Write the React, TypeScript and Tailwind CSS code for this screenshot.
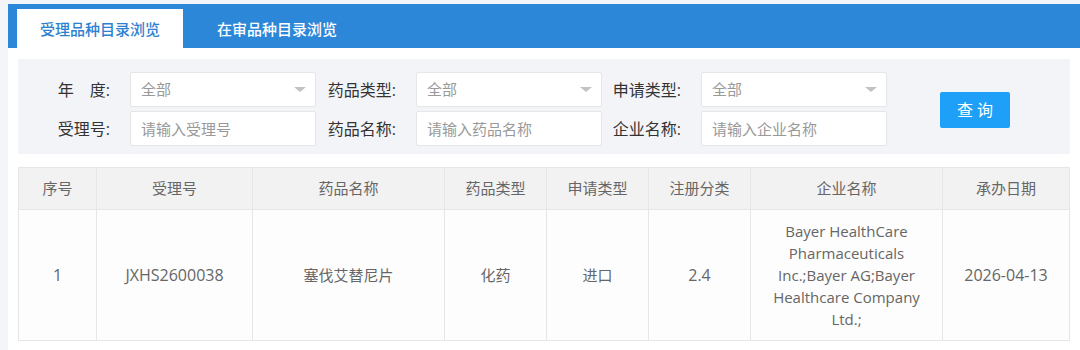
const font = { fontFamily: '"Open Sans", "Noto Sans CJK SC", sans-serif' };

interface Row {
  index: number;
  acceptNo: string;
  drugName: string;
  drugType: string;
  applyType: string;
  regClass: string;
  company: string;
  date: string;
}

const rows: Row[] = [
  {
    index: 1,
    acceptNo: 'JXHS2600038',
    drugName: '塞伐艾替尼片',
    drugType: '化药',
    applyType: '进口',
    regClass: '2.4',
    company: 'Bayer HealthCare Pharmaceuticals Inc.;Bayer AG;Bayer Healthcare Company Ltd.;',
    date: '2026-04-13',
  },
];

const columns = [
  { title: '序号', w: 'w-[78px]' },
  { title: '受理号', w: 'w-[156px]' },
  { title: '药品名称', w: 'w-[192px]' },
  { title: '药品类型', w: 'w-[102px]' },
  { title: '申请类型', w: 'w-[102px]' },
  { title: '注册分类', w: 'w-[102px]' },
  { title: '企业名称', w: 'w-[192px]' },
  { title: '承办日期', w: 'w-[127px]' },
];

const SelectBox: React.FC<{ value: string }> = ({ value }) => (
  <div className="flex h-[35px] w-[186px] items-center justify-between rounded-[2px] border border-[#e6e6e6] bg-white pl-[10px] pr-[9px] text-[15px] text-[#999]">
    <span>{value}</span>
    <span className="h-0 w-0 border-x-[6px] border-t-[5px] border-x-transparent border-t-[#c2c2c2]" />
  </div>
);

const InputBox: React.FC<{ placeholder: string }> = ({ placeholder }) => (
  <input
    placeholder={placeholder}
    className="h-[35px] w-[186px] rounded-[2px] border border-[#e6e6e6] bg-white pl-[10px] text-[15px] text-[#333] outline-none placeholder:text-[#999]"
  />
);

const Label: React.FC<{ text: string; w: string }> = ({ text, w }) => (
  <div className={`${w} pr-[20px] text-right text-[16px] text-[#333]`}>{text}</div>
);

export default function App() {
  return (
    <div className="min-h-[350px] w-[1080px] bg-[#f3f5f8] pl-[8px] pt-[4px]" style={font}>
      <div className="min-h-[346px] bg-white">
        {/* tabs */}
        <div className="flex h-[44px] items-end bg-[#2d87d8] pl-[9px]">
          <div className="flex h-[39px] w-[166px] items-center justify-center bg-white pt-[1px] text-[15px] font-medium text-[#2d7fd0]">
            受理品种目录浏览
          </div>
          <div className="flex h-[39px] w-[188px] items-center justify-center pt-[1px] text-[15px] font-medium text-white">
            在审品种目录浏览
          </div>
        </div>

        <div className="pl-[10px] pr-[2px]">
          {/* filters */}
          <div className="mt-[11px] flex h-[95px] w-[1052px] items-start bg-[#f3f4f7] pt-[13px]">
            <div className="flex flex-col gap-[4px]">
              <div className="flex items-center">
                <Label text="年　度:" w="w-[112px]" />
                <SelectBox value="全部" />
                <Label text="药品类型:" w="w-[100px]" />
                <SelectBox value="全部" />
                <Label text="申请类型:" w="w-[99px]" />
                <SelectBox value="全部" />
              </div>
              <div className="flex items-center">
                <Label text="受理号:" w="w-[112px]" />
                <InputBox placeholder="请输入受理号" />
                <Label text="药品名称:" w="w-[100px]" />
                <InputBox placeholder="请输入药品名称" />
                <Label text="企业名称:" w="w-[99px]" />
                <InputBox placeholder="请输入企业名称" />
              </div>
            </div>
            <button className="ml-[53px] mt-[20px] h-[36px] w-[70px] rounded-[2px] bg-[#1e9ff8] pl-[4px] text-[16px] tracking-[4px] text-white">
              查询
            </button>
          </div>

          {/* table */}
          <table className="mt-[13px] w-[1051px] table-fixed border-collapse text-center text-[15px] text-[#666]">
            <thead>
              <tr className="h-[42px] bg-[#f2f2f2]">
                {columns.map((c) => (
                  <th key={c.title} className={`${c.w} border border-[#e6e6e6] font-normal`}>
                    {c.title}
                  </th>
                ))}
              </tr>
            </thead>
            <tbody>
              {rows.map((r) => (
                <tr key={r.index} className="bg-[#fdfdfd]">
                  <td className="border border-[#e6e6e6] text-[16px]">{r.index}</td>
                  <td className="border border-[#e6e6e6] text-[16px]">{r.acceptNo}</td>
                  <td className="border border-[#e6e6e6]">{r.drugName}</td>
                  <td className="border border-[#e6e6e6]">{r.drugType}</td>
                  <td className="border border-[#e6e6e6]">{r.applyType}</td>
                  <td className="border border-[#e6e6e6] text-[16px]">{r.regClass}</td>
                  <td className="border border-[#e6e6e6] px-[15px] py-[10px] leading-[22px]">{r.company}</td>
                  <td className="border border-[#e6e6e6] text-[16px]">{r.date}</td>
                </tr>
              ))}
            </tbody>
          </table>
        </div>
      </div>
    </div>
  );
}
